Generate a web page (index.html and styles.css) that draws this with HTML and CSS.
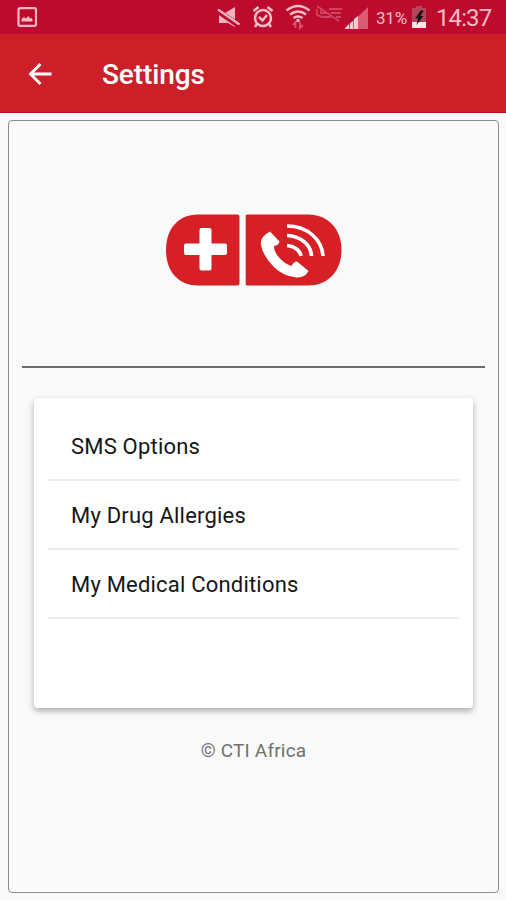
FILE: index.html
```html
<!DOCTYPE html>
<html lang="en">
<head>
<meta charset="utf-8">
<title>Settings</title>
<link rel="stylesheet" href="styles.css">
</head>
<body>
<div class="status">
  <svg class="i-image" width="20" height="20" viewBox="0 0 20 20"><rect x="1.500" y="1.200" width="17.500" height="17.600" rx="1.500" fill="none" stroke="#f3b9c5" stroke-width="2.200"/><path d="M4.500 14.500V12l2.500-2 2 1.500L11.500 9l1.500 2.500 1.500-.5 1 1.500v2z" fill="#f3b9c5"/></svg>
  <svg class="i-mute" width="24" height="22" viewBox="0 0 24 22"><path d="M2 6h6l10-6v20l-7-4H2z" fill="#f0b4c0"/><path d="M0 3.500L22 18.500" stroke="#bd0b2d" stroke-width="5.500"/><path d="M1 2.500L22.500 17.500" stroke="#f0b4c0" stroke-width="2.200"/></svg>
  <svg class="i-alarm" width="22" height="24" viewBox="0 0 22 24"><g fill="none" stroke="#f6bdc7" stroke-width="2.500"><circle cx="11" cy="13" r="8"/><path d="M1.500 6l5-4M20.500 6l-5-4M5 19l-2 3M17 19l2 3M7 12l3.500 3.500L15 10"/></g></svg>
  <svg class="i-wifi" width="26" height="26" viewBox="0 0 26 26"><g fill="none" stroke="#f6bdc7" stroke-width="2.600"><path d="M1.500 6.500q11.500-9 23 0M5 10.500q8-6 16 0M8.500 14q4.500-3 9 0"/></g><circle cx="13" cy="16.500" r="1.800" fill="#f6bdc7"/><path d="M10.500 24v-6l-2.500 3M15 18v6l3-3" fill="none" stroke="#d75a73" stroke-width="1.700"/></svg>
  <svg class="i-call" width="27" height="18" viewBox="0 0 27 18"><g fill="none" stroke="#cf4261" stroke-width="1.800"><path d="M1 4v6l5 2h9M5 4v4h6M13 4h13M15 8h10M20 12h5"/><path d="M1 1l22 15"/></g></svg>
  <svg class="i-signal" width="24" height="22" viewBox="0 0 24 22"><path d="M23 0v22H0z" fill="#d95b74"/><path d="M0 22v-1l4-4v5zM5 22v-6l3-2v8zM9 22V12l4-3v13z" fill="#f9cbd1"/></svg>
  <span class="percent">31%</span>
  <svg class="i-battery" width="14" height="22" viewBox="0 0 14 22"><path d="M4 0h6v2h4v20H0V2h4z" fill="#b44459"/><path d="M0 16h14v6H0z" fill="#fce8e5"/><path d="M9 4L3 12.500h3L4.500 19l7-9H8.500l3-5z" fill="#171014"/></svg>
  <span class="clock">14:37</span>
</div>
<header class="bar">
  <svg width="24" height="24" viewBox="0 0 24 24"><path d="M12.500 2L2.500 12l10 10M3 12h20.500" fill="none" stroke="#fff" stroke-width="2.900"/></svg>
  <h1>Settings</h1>
</header>
<main class="frame">
  <div class="brand">
    <svg width="178" height="74" viewBox="0 0 178 74">
      <path d="M34 1.500H73.500Q75.500 1.500 75.500 3.500V70.500Q75.500 72.500 73.500 72.500H34C14 72.500 2 58 2 37S14 1.500 34 1.500z" fill="#d71f26"/>
      <path d="M83 1.500H144C164 1.500 177.500 16 177.500 37S164 72.500 144 72.500H83Q81.700 72.500 81.700 71V3Q81.700 1.500 83 1.500z" fill="#d71f26"/>
      <path d="M37.500 15h8q2 0 2 2v13.500H61q2 0 2 2V40q0 2-2 2H47.500v13.500q0 2-2 2h-8q-2 0-2-2V42H22q-2 0-2-2v-7.500q0-2 2-2h13.500V17q0-2 2-2z" fill="#fff"/>
      <path d="M106 18.500l9.500 10q-1 4-5.500 4.500 0 6 5.500 12 5.500 6 12 8 2-4.500 5.500-4.500l11.500 9.500q-3.500 7-12 6.500-13-1-22.500-10.500-11-11-13-22-1.500-8 9-13.500z" fill="#fff"/>
      <g fill="none" stroke="#fff" stroke-width="3.600"><path d="M123 13C144 13 158 27 159 43M123 22.500C137 23 147 32 147.500 43M123 32.500C130 33 136 37 137 43"/></g>
    </svg>
  </div>
  <ul class="card">
    <li>SMS Options</li>
    <li>My Drug Allergies</li>
    <li>My Medical Conditions</li>
  </ul>
  <footer>© CTI Africa</footer>
</main>
</body>
</html>
```
FILE: styles.css
```css
* { box-sizing: border-box; }
body {
  margin: 0;
  height: 900px;
  display: flex;
  flex-direction: column;
  background: #fafafa;
  font-family: Roboto, "Liberation Sans", sans-serif;
}
svg { display: block; flex: none; }
.status {
  height: 34px;
  padding-left: 17px;
  display: flex;
  align-items: flex-start;
  background: #bd0b2d;
  color: #f6bdc7;
}
.i-image { margin-top: 7px; }
.i-mute { margin: 7px 0 0 180px; }
.i-alarm { margin: 5px 0 0 11px; }
.i-wifi { margin: 4px 0 0 11px; }
.i-call { margin: 5px 0 0 5px; }
.i-signal { margin: 7px 0 0 2px; }
.percent {
  width: 36px;
  margin: 8px 0 0 7px;
  font-size: 17px;
  line-height: 21px;
  letter-spacing: -.2px;
}
.i-battery { margin-top: 6px; }
.clock {
  margin: 4px 0 0 10px;
  font-size: 24px;
  line-height: 28px;
  letter-spacing: -.9px;
}
.bar {
  height: 79px;
  padding: 1px 0 0 28px;
  display: flex;
  align-items: center;
  gap: 50px;
  background: #cc1f28;
  border-bottom: 1px solid #bd0c18;
  color: #fff;
}
h1 {
  margin: 3px 0 0;
  font-size: 28px;
  line-height: 34px;
  font-weight: 500;
  letter-spacing: -.1px;
}
.frame {
  flex: 1;
  margin: 7px 7px 7px 8px;
  padding: 0 13px;
  border: 1px solid #8d8d8d;
  border-radius: 4px;
}
.brand {
  height: 247px;
  padding: 92px 0 0 142px;
  border-bottom: 2px solid #6d6b6d;
}
.card {
  height: 310px;
  margin: 30px 12px 0;
  padding: 14px 14px 0;
  list-style: none;
  background: #fff;
  border-radius: 4px;
  box-shadow: 0 3px 6px rgba(0, 0, 0, .32);
}
.card li {
  height: 69px;
  padding-left: 23px;
  border-bottom: 2px solid #ededed;
  font-size: 22px;
  line-height: 69px;
  letter-spacing: .2px;
  color: #161616;
}
footer {
  margin-top: 30px;
  text-align: center;
  font-size: 19px;
  line-height: 26px;
  letter-spacing: .2px;
  color: #707070;
}
```
